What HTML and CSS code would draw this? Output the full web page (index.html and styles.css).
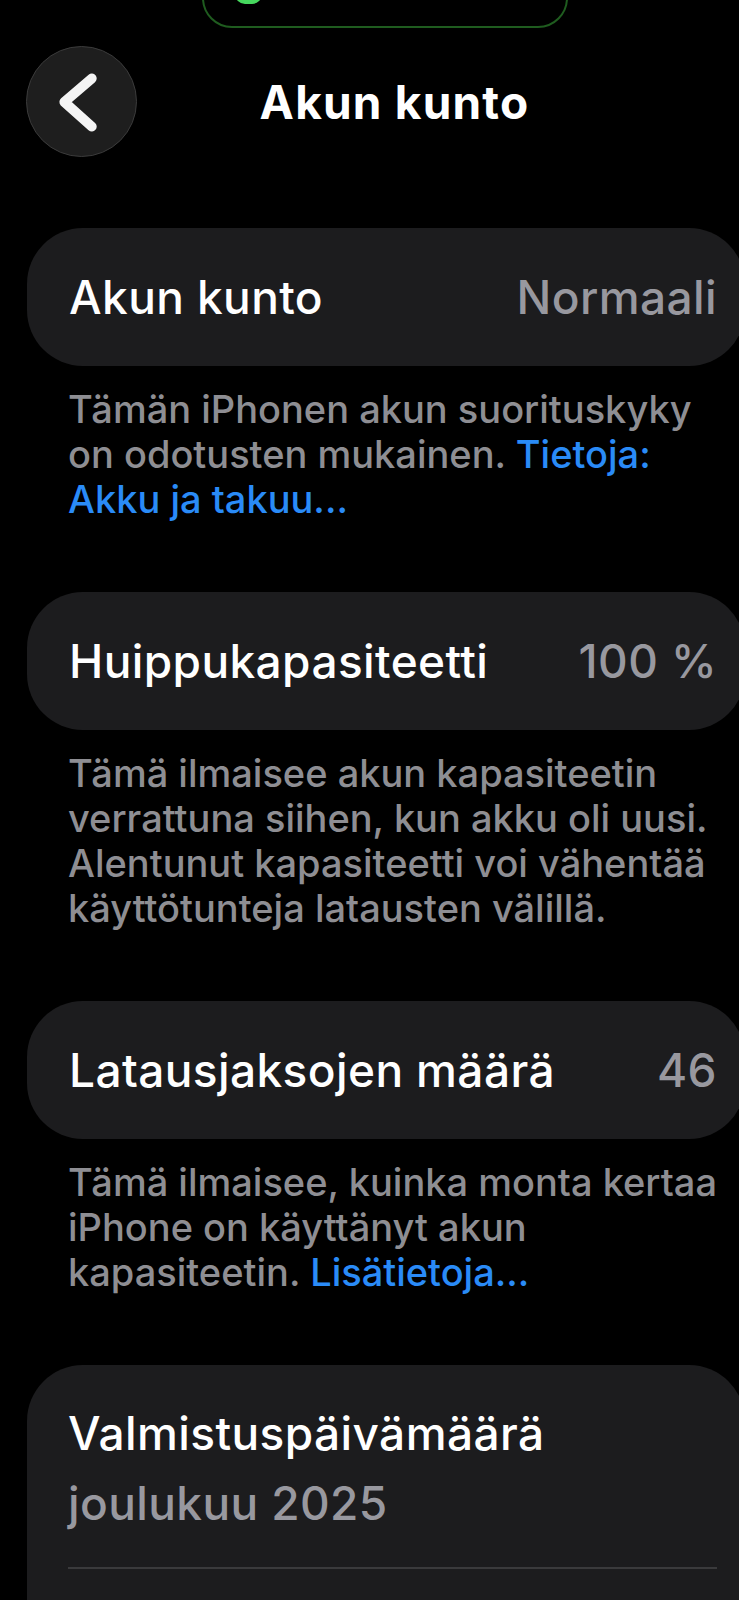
FILE: index.html
```html
<!DOCTYPE html>
<html lang="fi">
<head>
<meta charset="utf-8">
<title>Akun kunto</title>
<link rel="stylesheet" href="styles.css">
</head>
<body>
<div class="screen">
  <div class="status">
    <div class="island"><span class="island-dot"></span></div>
  </div>
  <header class="nav">
    <button class="back" aria-label="Takaisin">
      <svg width="111" height="111" viewBox="0 0 111 111"><path d="M66 32 L38 56 L66 81" fill="none" stroke="#f4f4f4" stroke-width="10" stroke-linecap="round" stroke-linejoin="round"/></svg>
    </button>
    <h1 class="title">Akun kunto</h1>
    <span></span>
  </header>

  <section class="card row first">
    <span class="label">Akun kunto</span>
    <span class="value">Normaali</span>
  </section>
  <p class="note">Tämän iPhonen akun suorituskyky on odotusten mukainen. <a class="link">Tietoja: Akku ja takuu...</a></p>

  <section class="card row">
    <span class="label">Huippukapasiteetti</span>
    <span class="value">100 %</span>
  </section>
  <p class="note">Tämä ilmaisee akun kapasiteetin verrattuna siihen, kun akku oli uusi. Alentunut kapasiteetti voi vähentää käyttötunteja latausten välillä.</p>

  <section class="card row">
    <span class="label">Latausjaksojen määrä</span>
    <span class="value">46</span>
  </section>
  <p class="note">Tämä ilmaisee, kuinka monta kertaa iPhone on käyttänyt akun kapasiteetin. <a class="link">Lisätietoja...</a></p>

  <section class="card stack">
    <div class="label">Valmistuspäivämäärä</div>
    <div class="value">joulukuu 2025</div>
    <div class="sep"></div>
  </section>
</div>
</body>
</html>
```

FILE: styles.css
```css
html, body {
  margin: 0;
  padding: 0;
  background: #000;
  overflow: hidden;
}
body {
  width: 739px;
  height: 1600px;
  font-family: Inter, "Noto Sans", sans-serif;
  color: #fff;
}
.screen {
  margin-left: 27px;
  width: 736px;
}
.status {
  position: relative;
  height: 26px;
}
.island {
  position: absolute;
  left: 175px;
  top: -40px;
  width: 362px;
  height: 64px;
  border: 2px solid #1f5c1f;
  border-radius: 30px;
  background: #000;
}
.island-dot {
  position: absolute;
  left: 31px;
  top: 22px;
  width: 27px;
  height: 20px;
  border-radius: 10px;
  background: #46d85e;
}
.nav {
  margin-top: 20px;
  display: grid;
  grid-template-columns: 111px 1fr 111px;
  align-items: center;
  height: 111px;
  margin-left: -1px;
}
.back {
  width: 111px;
  height: 111px;
  padding: 0;
  border-radius: 50%;
  border: 1.5px solid #3b3b3b;
  background: #1e1e1e;
  display: flex;
  align-items: center;
  justify-content: center;
}
.back svg { display: block; }
.title {
  margin: 0;
  text-align: center;
  font-size: 46px;
  font-weight: 700;
  letter-spacing: 1.2px;
}
.card {
  width: 718px;
  box-sizing: border-box;
  background: #1c1c1e;
  border-radius: 56px;
}
.row {
  height: 138px;
  display: flex;
  align-items: center;
  justify-content: space-between;
  padding: 0 28px 0 42px;
}
.first { margin-top: 71px; }
.label {
  font-size: 46px;
  font-weight: 500;
  letter-spacing: 0.4px;
}
.value {
  font-size: 46px;
  font-weight: 500;
  color: #98989f;
  letter-spacing: 0.4px;
}
.note {
  margin: 21px 0 70px;
  padding: 0 20px 0 41px;
  font-size: 38px;
  font-weight: 500;
  line-height: 45px;
  letter-spacing: 0;
  color: #8e8e93;
}
.link {
  color: #2a8bf7;
}
.stack {
  padding: 33px 28px 80px 41px;
  border-radius: 56px 56px 0 0;
}
.stack .label,
.stack .value {
  line-height: 70px;
}
.sep {
  margin-top: 29px;
  height: 1.5px;
  background: #3a3a3c;
}
```
